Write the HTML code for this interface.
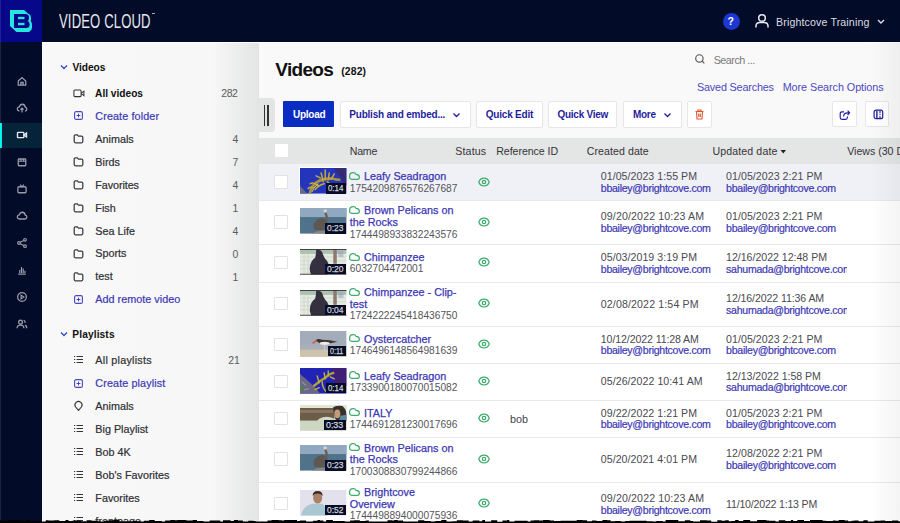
<!DOCTYPE html>
<html><head><meta charset="utf-8">
<style>
*{margin:0;padding:0;box-sizing:border-box}
html,body{width:900px;height:523px;overflow:hidden;background:#fff;font-family:"Liberation Sans",sans-serif;position:relative}
.a{position:absolute}
.t{white-space:nowrap}
svg{overflow:visible}
</style></head><body>
<div class="a" style="left:0.00px;top:0.00px;width:900.00px;height:42.00px;background:#020b27"></div>
<div class="a" style="left:0.00px;top:0.00px;width:42.00px;height:42.00px;background:#07078a"></div>
<div class="a" style="left:0.00px;top:42.00px;width:42.00px;height:481.00px;background:#020b27"></div>
<div class="a" style="left:42.00px;top:42.00px;width:217.00px;height:481.00px;background:linear-gradient(to right,#f8f8f8 0px,#f7f7f7 170px,#e3e4e4 217px)"></div>
<div class="a" style="left:259.00px;top:42.00px;width:641.00px;height:481.00px;background:#f9f9f9"></div>
<div class="a" style="left:42.00px;top:42.00px;width:858.00px;height:1.00px;background:#fff"></div>
<svg class="a" style="left:0.00px;top:0.00px" width="42" height="42" viewBox="0 0 42 42"><path d="M10 10 H24 L28 13.5 Q31 14.5 31 18 V19.8 L30.6 21 Q32 22 32 24.5 V27.5 Q32 30.5 29.5 31.5 L29 32 H16.5 L10 26 Z" fill="#25e6dc"/><path d="M14 14 H25.5 Q29 14 29 17.5 V18.5 Q29 20.6 27.4 21.1 Q29.6 21.7 29.6 24.2 V25 Q29.6 28 26 28 H14 Z" fill="#07078a"/><rect x="18" y="16.8" width="6.5" height="2.4" fill="#25e6dc"/><rect x="18" y="22.8" width="6.5" height="2.4" fill="#25e6dc"/></svg>
<div class="a" style="left:58.5px;top:10.5px;font-size:20px;line-height:20px;color:#e6e8ee;transform:scaleX(0.655);transform-origin:0 0;white-space:nowrap;letter-spacing:0.2px">VIDEO CLOUD</div>
<div class="a" style="left:151.50px;top:13.20px;width:3.00px;height:0.80px;background:#aab"></div>
<div class="a" style="left:723.00px;top:13.00px;width:17.00px;height:17.00px;background:#1d37d0;border-radius:50%"></div>
<div class="a t" style="left:727.60px;top:16.00px;font-size:10.50px;line-height:10.50px;color:#fff;font-weight:bold;">?</div>
<svg class="a" style="left:754.00px;top:13.00px" width="16" height="16" viewBox="0 0 16 16"><circle cx="8" cy="5" r="3.3" fill="none" stroke="#e8e8ee" stroke-width="1.5"/><path d="M2 14.5 V13 Q2 9.5 6 9.5 H10 Q14 9.5 14 13 V14.5" fill="none" stroke="#e8e8ee" stroke-width="1.5"/></svg>
<div class="a t" style="left:776.00px;top:17.00px;font-size:10.60px;line-height:10.60px;color:#dcdde3;letter-spacing:0.148px;">Brightcove Training</div>
<svg class="a" style="left:876.00px;top:18.00px" width="10" height="7" viewBox="0 0 10 7"><path d="M2 2 L5 5 L8 2" fill="none" stroke="#dcdde3" stroke-width="1.4"/></svg>
<div class="a" style="left:0.00px;top:122.60px;width:42.00px;height:25.00px;background:#05243a"></div>
<div class="a" style="left:0.00px;top:122.60px;width:2.00px;height:25.00px;background:#00ecec"></div>
<svg class="a" style="left:16px;top:75.00px" width="12" height="12" viewBox="0 0 16 16"><path d="M3 8 L8 3.5 L13 8 V13.5 H3 Z" fill="none" stroke="#9a9cab" stroke-width="1.69"/><path d="M6.5 13.5 V10 H9.5 V13.5" fill="none" stroke="#9a9cab" stroke-width="1.69"/></svg>
<svg class="a" style="left:16px;top:102.00px" width="12" height="12" viewBox="0 0 16 16"><path d="M4.5 12 Q1.5 11.5 1.8 8.8 Q2.2 6.5 4.5 6.5 Q5.5 3 8.5 3 Q12 3.2 12.3 6.8 Q14.5 7 14.5 9.5 Q14.3 12 12 12" fill="none" stroke="#9a9cab" stroke-width="1.69"/><path d="M8 14 V8.5 M6 10.3 L8 8.3 L10 10.3" fill="none" stroke="#9a9cab" stroke-width="1.69"/></svg>
<svg class="a" style="left:16px;top:129.00px" width="12" height="12" viewBox="0 0 16 16"><rect x="2" y="4.5" width="8.5" height="7" rx="1" fill="none" stroke="#e8eaf0" stroke-width="1.82"/><path d="M10.5 8 L14 5.5 V10.5 Z" fill="none" stroke="#e8eaf0" stroke-width="1.82"/></svg>
<svg class="a" style="left:16px;top:156.00px" width="12" height="12" viewBox="0 0 16 16"><rect x="3" y="4" width="10" height="9" rx="1" fill="none" stroke="#9a9cab" stroke-width="1.69"/><path d="M3 7 H13 M6 4 L7 7 M9.5 4 L10.5 7" fill="none" stroke="#9a9cab" stroke-width="1.43"/></svg>
<svg class="a" style="left:16px;top:183.00px" width="12" height="12" viewBox="0 0 16 16"><rect x="2.5" y="5" width="11" height="8" rx="1.5" fill="none" stroke="#9a9cab" stroke-width="1.69"/><path d="M5.5 2 L8 5 L10.5 2" fill="none" stroke="#9a9cab" stroke-width="1.56"/></svg>
<svg class="a" style="left:16px;top:210.00px" width="12" height="12" viewBox="0 0 16 16"><path d="M4.5 12 Q1.5 11.5 1.8 8.8 Q2.2 6.5 4.5 6.5 Q5.5 3 8.5 3 Q12 3.2 12.3 6.8 Q14.5 7 14.5 9.5 Q14.3 12 12 12 Z" fill="none" stroke="#9a9cab" stroke-width="1.69"/><path d="" stroke="#9a9cab"/></svg>
<svg class="a" style="left:16px;top:237.00px" width="12" height="12" viewBox="0 0 16 16"><circle cx="4" cy="8" r="1.8" fill="none" stroke="#9a9cab" stroke-width="1.56"/><circle cx="12" cy="3.8" r="1.8" fill="none" stroke="#9a9cab" stroke-width="1.56"/><circle cx="12" cy="12.2" r="1.8" fill="none" stroke="#9a9cab" stroke-width="1.56"/><path d="M5.6 7.1 L10.4 4.7 M5.6 8.9 L10.4 11.3" stroke="#9a9cab" stroke-width="1.56"/></svg>
<svg class="a" style="left:16px;top:264.00px" width="12" height="12" viewBox="0 0 16 16"><path d="M3 13.5 H13 M5 12 V8 M7.3 12 V4 M9.6 12 V6 M11.9 12 V9" fill="none" stroke="#9a9cab" stroke-width="1.56"/><path d="" stroke="#9a9cab"/></svg>
<svg class="a" style="left:16px;top:291.00px" width="12" height="12" viewBox="0 0 16 16"><circle cx="8" cy="8" r="5.8" fill="none" stroke="#9a9cab" stroke-width="1.69"/><path d="M6.8 5.5 L10.5 8 L6.8 10.5 Z" fill="none" stroke="#9a9cab" stroke-width="1.56"/></svg>
<svg class="a" style="left:16px;top:318.00px" width="12" height="12" viewBox="0 0 16 16"><circle cx="6" cy="5.5" r="2.5" fill="none" stroke="#9a9cab" stroke-width="1.69"/><path d="M1.5 13.5 Q1.5 9.5 6 9.5 Q10.5 9.5 10.5 13.5 M10 3 Q12.5 3.5 12 6.5 M12 9.5 Q14.5 10.5 14.5 13.5" fill="none" stroke="#9a9cab" stroke-width="1.69"/></svg>
<svg class="a" style="left:60.00px;top:64.00px" width="8" height="6" viewBox="0 0 8 6"><path d="M1 1.5 L4 4.5 L7 1.5" fill="none" stroke="#3b4bd0" stroke-width="1.4"/></svg>
<div class="a t" style="left:72.40px;top:63.00px;font-size:10.20px;line-height:10.20px;color:#111;font-weight:bold;letter-spacing:-0.052px;">Videos</div>
<svg class="a" style="left:72.50px;top:88.50px" width="12" height="9" viewBox="0 0 12 9"><rect x="0.9" y="1" width="7.2" height="6.6" rx="1" fill="none" stroke="#333" stroke-width="1.05"/><path d="M8.2 4.2 L10.9 2.2 V6.6 L8.2 4.6" fill="none" stroke="#333" stroke-width="1.05"/></svg>
<div class="a t" style="left:95.10px;top:89.00px;font-size:10.20px;line-height:10.20px;color:#111;font-weight:bold;letter-spacing:-0.020px;">All videos</div>
<div class="a t" style="left:221.30px;top:89.00px;font-size:10.40px;line-height:10.40px;color:#5a5a5f;letter-spacing:-0.376px;">282</div>
<svg class="a" style="left:74.00px;top:111.00px" width="10" height="10" viewBox="0 0 10 10"><rect x="0.6" y="0.6" width="7.8" height="7.8" rx="1.5" fill="none" stroke="#4a45c0" stroke-width="1.1"/><path d="M4.5 2.6 V6.4 M2.6 4.5 H6.4" stroke="#3a35b0" stroke-width="0.9"/></svg>
<div class="a t" style="left:95.30px;top:111.00px;font-size:10.80px;line-height:10.80px;color:#3c37b3;letter-spacing:0.105px;-webkit-text-stroke:0.2px #3c37b3;">Create folder</div>
<svg class="a" style="left:73.00px;top:134.14px" width="11" height="10" viewBox="0 0 11 10"><path d="M1.2 2 Q1.2 0.8 2.4 0.8 H4.3 L5.5 2.1 H8.6 Q9.8 2.1 9.8 3.3 V7.6 Q9.8 8.8 8.6 8.8 H2.4 Q1.2 8.8 1.2 7.6 Z" fill="none" stroke="#3a3a40" stroke-width="1.25"/></svg>
<div class="a t" style="left:95.30px;top:134.00px;font-size:10.80px;line-height:10.80px;color:#2e2e33;letter-spacing:-0.002px;-webkit-text-stroke:0.2px #2e2e33;">Animals</div>
<div class="a t" style="left:232.60px;top:135.00px;font-size:10.40px;line-height:10.40px;color:#5a5a5f;">4</div>
<svg class="a" style="left:73.00px;top:157.11px" width="11" height="10" viewBox="0 0 11 10"><path d="M1.2 2 Q1.2 0.8 2.4 0.8 H4.3 L5.5 2.1 H8.6 Q9.8 2.1 9.8 3.3 V7.6 Q9.8 8.8 8.6 8.8 H2.4 Q1.2 8.8 1.2 7.6 Z" fill="none" stroke="#3a3a40" stroke-width="1.25"/></svg>
<div class="a t" style="left:95.30px;top:157.00px;font-size:10.80px;line-height:10.80px;color:#2e2e33;-webkit-text-stroke:0.2px #2e2e33;">Birds</div>
<div class="a t" style="left:232.60px;top:158.00px;font-size:10.40px;line-height:10.40px;color:#5a5a5f;">7</div>
<svg class="a" style="left:73.00px;top:180.08px" width="11" height="10" viewBox="0 0 11 10"><path d="M1.2 2 Q1.2 0.8 2.4 0.8 H4.3 L5.5 2.1 H8.6 Q9.8 2.1 9.8 3.3 V7.6 Q9.8 8.8 8.6 8.8 H2.4 Q1.2 8.8 1.2 7.6 Z" fill="none" stroke="#3a3a40" stroke-width="1.25"/></svg>
<div class="a t" style="left:95.30px;top:180.00px;font-size:10.80px;line-height:10.80px;color:#2e2e33;letter-spacing:-0.089px;-webkit-text-stroke:0.2px #2e2e33;">Favorites</div>
<div class="a t" style="left:232.60px;top:181.00px;font-size:10.40px;line-height:10.40px;color:#5a5a5f;">4</div>
<svg class="a" style="left:73.00px;top:203.05px" width="11" height="10" viewBox="0 0 11 10"><path d="M1.2 2 Q1.2 0.8 2.4 0.8 H4.3 L5.5 2.1 H8.6 Q9.8 2.1 9.8 3.3 V7.6 Q9.8 8.8 8.6 8.8 H2.4 Q1.2 8.8 1.2 7.6 Z" fill="none" stroke="#3a3a40" stroke-width="1.25"/></svg>
<div class="a t" style="left:95.30px;top:203.00px;font-size:10.80px;line-height:10.80px;color:#2e2e33;-webkit-text-stroke:0.2px #2e2e33;">Fish</div>
<div class="a t" style="left:232.60px;top:204.00px;font-size:10.40px;line-height:10.40px;color:#5a5a5f;">1</div>
<svg class="a" style="left:73.00px;top:226.02px" width="11" height="10" viewBox="0 0 11 10"><path d="M1.2 2 Q1.2 0.8 2.4 0.8 H4.3 L5.5 2.1 H8.6 Q9.8 2.1 9.8 3.3 V7.6 Q9.8 8.8 8.6 8.8 H2.4 Q1.2 8.8 1.2 7.6 Z" fill="none" stroke="#3a3a40" stroke-width="1.25"/></svg>
<div class="a t" style="left:95.30px;top:226.00px;font-size:10.80px;line-height:10.80px;color:#2e2e33;-webkit-text-stroke:0.2px #2e2e33;">Sea Life</div>
<div class="a t" style="left:232.60px;top:227.00px;font-size:10.40px;line-height:10.40px;color:#5a5a5f;">4</div>
<svg class="a" style="left:73.00px;top:248.99px" width="11" height="10" viewBox="0 0 11 10"><path d="M1.2 2 Q1.2 0.8 2.4 0.8 H4.3 L5.5 2.1 H8.6 Q9.8 2.1 9.8 3.3 V7.6 Q9.8 8.8 8.6 8.8 H2.4 Q1.2 8.8 1.2 7.6 Z" fill="none" stroke="#3a3a40" stroke-width="1.25"/></svg>
<div class="a t" style="left:95.30px;top:248.00px;font-size:10.80px;line-height:10.80px;color:#2e2e33;-webkit-text-stroke:0.2px #2e2e33;">Sports</div>
<div class="a t" style="left:232.60px;top:250.00px;font-size:10.40px;line-height:10.40px;color:#5a5a5f;">0</div>
<svg class="a" style="left:73.00px;top:271.96px" width="11" height="10" viewBox="0 0 11 10"><path d="M1.2 2 Q1.2 0.8 2.4 0.8 H4.3 L5.5 2.1 H8.6 Q9.8 2.1 9.8 3.3 V7.6 Q9.8 8.8 8.6 8.8 H2.4 Q1.2 8.8 1.2 7.6 Z" fill="none" stroke="#3a3a40" stroke-width="1.25"/></svg>
<div class="a t" style="left:95.30px;top:271.00px;font-size:10.80px;line-height:10.80px;color:#2e2e33;-webkit-text-stroke:0.2px #2e2e33;">test</div>
<div class="a t" style="left:232.60px;top:273.00px;font-size:10.40px;line-height:10.40px;color:#5a5a5f;">1</div>
<svg class="a" style="left:74.00px;top:295.00px" width="10" height="10" viewBox="0 0 10 10"><rect x="0.6" y="0.6" width="7.8" height="7.8" rx="1.5" fill="none" stroke="#4a45c0" stroke-width="1.1"/><path d="M4.5 2.6 V6.4 M2.6 4.5 H6.4" stroke="#3a35b0" stroke-width="0.9"/></svg>
<div class="a t" style="left:95.30px;top:294.00px;font-size:10.80px;line-height:10.80px;color:#3c37b3;letter-spacing:0.023px;-webkit-text-stroke:0.2px #3c37b3;">Add remote video</div>
<svg class="a" style="left:60.00px;top:331.00px" width="8" height="6" viewBox="0 0 8 6"><path d="M1 1.5 L4 4.5 L7 1.5" fill="none" stroke="#3b4bd0" stroke-width="1.4"/></svg>
<div class="a t" style="left:72.30px;top:330.00px;font-size:10.20px;line-height:10.20px;color:#111;font-weight:bold;letter-spacing:0.113px;">Playlists</div>
<svg class="a" style="left:74.00px;top:356.00px" width="10" height="8" viewBox="0 0 10 8"><path d="M0 0.5 H1.2 M0 3.5 H1.2 M0 6.5 H1.2 M2.6 0.5 H9 M2.6 3.5 H9 M2.6 6.5 H9" stroke="#333" stroke-width="1"/></svg>
<div class="a t" style="left:95.30px;top:355.00px;font-size:10.80px;line-height:10.80px;color:#2e2e33;letter-spacing:0.240px;-webkit-text-stroke:0.2px #2e2e33;">All playlists</div>
<div class="a t" style="left:228.20px;top:356.00px;font-size:10.40px;line-height:10.40px;color:#5a5a5f;">21</div>
<svg class="a" style="left:74.00px;top:379.00px" width="10" height="10" viewBox="0 0 10 10"><rect x="0.6" y="0.6" width="7.8" height="7.8" rx="1.5" fill="none" stroke="#4a45c0" stroke-width="1.1"/><path d="M4.5 2.6 V6.4 M2.6 4.5 H6.4" stroke="#3a35b0" stroke-width="0.9"/></svg>
<div class="a t" style="left:95.30px;top:378.00px;font-size:10.80px;line-height:10.80px;color:#3c37b3;letter-spacing:0.112px;-webkit-text-stroke:0.2px #3c37b3;">Create playlist</div>
<svg class="a" style="left:74.00px;top:401.00px" width="10" height="11" viewBox="0 0 10 11"><path d="M4.5 9.3 L1.63 6 A3.5 3.5 0 1 1 7.37 6 Z" fill="none" stroke="#333" stroke-width="1.1" stroke-linejoin="round"/></svg>
<div class="a t" style="left:95.30px;top:401.00px;font-size:10.80px;line-height:10.80px;color:#2e2e33;-webkit-text-stroke:0.2px #2e2e33;">Animals</div>
<svg class="a" style="left:74.00px;top:425.00px" width="10" height="8" viewBox="0 0 10 8"><path d="M0 0.5 H1.2 M0 3.5 H1.2 M0 6.5 H1.2 M2.6 0.5 H9 M2.6 3.5 H9 M2.6 6.5 H9" stroke="#333" stroke-width="1"/></svg>
<div class="a t" style="left:95.30px;top:424.00px;font-size:10.80px;line-height:10.80px;color:#2e2e33;-webkit-text-stroke:0.2px #2e2e33;">Big Playlist</div>
<svg class="a" style="left:74.00px;top:448.00px" width="10" height="8" viewBox="0 0 10 8"><path d="M0 0.5 H1.2 M0 3.5 H1.2 M0 6.5 H1.2 M2.6 0.5 H9 M2.6 3.5 H9 M2.6 6.5 H9" stroke="#333" stroke-width="1"/></svg>
<div class="a t" style="left:95.30px;top:447.00px;font-size:10.80px;line-height:10.80px;color:#2e2e33;-webkit-text-stroke:0.2px #2e2e33;">Bob 4K</div>
<svg class="a" style="left:74.00px;top:471.00px" width="10" height="8" viewBox="0 0 10 8"><path d="M0 0.5 H1.2 M0 3.5 H1.2 M0 6.5 H1.2 M2.6 0.5 H9 M2.6 3.5 H9 M2.6 6.5 H9" stroke="#333" stroke-width="1"/></svg>
<div class="a t" style="left:95.30px;top:470.00px;font-size:10.80px;line-height:10.80px;color:#2e2e33;-webkit-text-stroke:0.2px #2e2e33;">Bob&#x27;s Favorites</div>
<svg class="a" style="left:74.00px;top:494.00px" width="10" height="8" viewBox="0 0 10 8"><path d="M0 0.5 H1.2 M0 3.5 H1.2 M0 6.5 H1.2 M2.6 0.5 H9 M2.6 3.5 H9 M2.6 6.5 H9" stroke="#333" stroke-width="1"/></svg>
<div class="a t" style="left:95.30px;top:493.00px;font-size:10.80px;line-height:10.80px;color:#2e2e33;-webkit-text-stroke:0.2px #2e2e33;">Favorites</div>
<svg class="a" style="left:74.00px;top:517.00px" width="10" height="8" viewBox="0 0 10 8"><path d="M0 0.5 H1.2 M0 3.5 H1.2 M0 6.5 H1.2 M2.6 0.5 H9 M2.6 3.5 H9 M2.6 6.5 H9" stroke="#333" stroke-width="1"/></svg>
<div class="a t" style="left:95.30px;top:516.00px;font-size:10.80px;line-height:10.80px;color:#2e2e33;-webkit-text-stroke:0.2px #2e2e33;">frontpage</div>
<div class="a t" style="left:275.30px;top:60.00px;font-size:19.00px;line-height:19.00px;color:#111;font-weight:bold;letter-spacing:-0.711px;">Videos</div>
<div class="a t" style="left:341.30px;top:67.00px;font-size:10.40px;line-height:10.40px;color:#111;font-weight:bold;letter-spacing:0.105px;">(282)</div>
<svg class="a" style="left:694.80px;top:54.00px" width="11" height="11" viewBox="0 0 11 11"><circle cx="4.4" cy="4.4" r="3.7" fill="none" stroke="#555" stroke-width="1.15"/><path d="M7.1 7.1 L9.4 9.4" stroke="#555" stroke-width="1.2"/></svg>
<div class="a t" style="left:713.70px;top:55.00px;font-size:10.80px;line-height:10.80px;color:#7a7a80;letter-spacing:-0.514px;">Search ...</div>
<div class="a t" style="left:697.00px;top:82.00px;font-size:10.80px;line-height:10.80px;color:#4c48c0;letter-spacing:-0.173px;">Saved Searches</div>
<div class="a t" style="left:782.70px;top:82.00px;font-size:10.80px;line-height:10.80px;color:#4c48c0;letter-spacing:-0.058px;">More Search Options</div>
<div class="a" style="left:259.00px;top:98.40px;width:15.70px;height:34.00px;background:#e3e4e4;border-radius:0 4px 4px 0"></div>
<div class="a" style="left:263.60px;top:104.80px;width:1.80px;height:21.20px;background:#333"></div>
<div class="a" style="left:267.20px;top:104.80px;width:1.80px;height:21.20px;background:#333"></div>
<div class="a" style="left:283.30px;top:101.20px;width:51.10px;height:26.20px;background:#0a2cc2;border-radius:1px"></div>
<div class="a t" style="left:292.90px;top:110.00px;font-size:10.00px;line-height:10.00px;color:#fff;font-weight:bold;letter-spacing:-0.237px;">Upload</div>
<div class="a" style="left:340.00px;top:101.00px;width:130.70px;height:26.50px;background:#fff;border:1px solid #e6e6e8;border-radius:2px"></div>
<div class="a t" style="left:349.30px;top:110.00px;font-size:10.00px;line-height:10.00px;color:#1f1d9e;font-weight:bold;letter-spacing:-0.211px;">Publish and embed...</div>
<svg class="a" style="left:452.00px;top:112.00px" width="9" height="7" viewBox="0 0 9 7"><path d="M1.5 1.5 L4.5 4.5 L7.5 1.5" fill="none" stroke="#1f1d9e" stroke-width="1.3"/></svg>
<div class="a" style="left:476.00px;top:101.00px;width:66.80px;height:26.50px;background:#fff;border:1px solid #e6e6e8;border-radius:2px"></div>
<div class="a t" style="left:485.80px;top:110.00px;font-size:10.00px;line-height:10.00px;color:#1f1d9e;font-weight:bold;letter-spacing:-0.217px;">Quick Edit</div>
<div class="a" style="left:548.30px;top:101.00px;width:68.90px;height:26.50px;background:#fff;border:1px solid #e6e6e8;border-radius:2px"></div>
<div class="a t" style="left:557.50px;top:110.00px;font-size:10.00px;line-height:10.00px;color:#1f1d9e;font-weight:bold;letter-spacing:-0.264px;">Quick View</div>
<div class="a" style="left:623.30px;top:101.00px;width:58.40px;height:26.50px;background:#fff;border:1px solid #e6e6e8;border-radius:2px"></div>
<div class="a t" style="left:633.00px;top:110.00px;font-size:10.00px;line-height:10.00px;color:#1f1d9e;font-weight:bold;letter-spacing:-0.297px;">More</div>
<svg class="a" style="left:663.00px;top:112.00px" width="9" height="7" viewBox="0 0 9 7"><path d="M1.5 1.5 L4.5 4.5 L7.5 1.5" fill="none" stroke="#1f1d9e" stroke-width="1.3"/></svg>
<div class="a" style="left:687.20px;top:101.00px;width:24.50px;height:26.50px;background:#fff;border:1px solid #e6e6e8;border-radius:2px"></div>
<svg class="a" style="left:694.00px;top:109.00px" width="11" height="11" viewBox="0 0 11 11"><path d="M1.5 2.5 H9.5 M4 2.5 V1 H7 V2.5 M2.5 2.5 L3 10 H8 L8.5 2.5 M4.7 4.5 V8 M6.3 4.5 V8" fill="none" stroke="#e0552e" stroke-width="1.1"/></svg>
<div class="a" style="left:832.40px;top:101.20px;width:24.20px;height:26.20px;background:#fff;border:1px solid #e6e6e8;border-radius:2px"></div>
<svg class="a" style="left:839.00px;top:108.50px" width="12" height="12" viewBox="0 0 12 12"><path d="M5 2.8 H3 Q1.2 2.8 1.2 4.6 V8.6 Q1.2 10.4 3 10.4 H6.6 Q8.4 10.4 8.4 8.6 V7.6" fill="none" stroke="#1f1d9e" stroke-width="1.15"/><path d="M4.6 7.6 Q4.6 3.8 8.6 3.8 H10.2 M8.6 1.6 L10.6 3.8 L8.6 6" fill="none" stroke="#1f1d9e" stroke-width="1.15"/></svg>
<div class="a" style="left:865.30px;top:101.20px;width:24.20px;height:26.20px;background:#fff;border:1px solid #e6e6e8;border-radius:2px"></div>
<svg class="a" style="left:872.50px;top:108.70px" width="11" height="11" viewBox="0 0 11 11"><rect x="1.1" y="1.1" width="8.6" height="8.6" rx="2" fill="none" stroke="#1f1d9e" stroke-width="1.2"/><path d="M3.9 1.5 V9.5" stroke="#1f1d9e" stroke-width="1.4"/><path d="M7 1.5 V4 M7 7 V9.5" stroke="#1f1d9e" stroke-width="1.1"/><path d="M6.1 4.8 H7.9 L7 6.4 Z" fill="#1f1d9e"/></svg>
<div class="a" style="left:259.00px;top:138.00px;width:641.00px;height:26.00px;background:#e4e5e5"></div>
<div class="a" style="left:274.50px;top:144.00px;width:13.50px;height:12.50px;background:#fff;border-radius:1px"></div>
<div class="a t" style="left:349.80px;top:146.00px;font-size:10.60px;line-height:10.60px;color:#333338;letter-spacing:-0.259px;">Name</div>
<div class="a t" style="left:455.20px;top:146.00px;font-size:10.60px;line-height:10.60px;color:#333338;letter-spacing:0.190px;">Status</div>
<div class="a t" style="left:496.20px;top:146.00px;font-size:10.60px;line-height:10.60px;color:#333338;letter-spacing:-0.041px;">Reference ID</div>
<div class="a t" style="left:586.80px;top:146.00px;font-size:10.60px;line-height:10.60px;color:#333338;letter-spacing:0.065px;">Created date</div>
<div class="a t" style="left:712.40px;top:146.00px;font-size:10.60px;line-height:10.60px;color:#333338;letter-spacing:0.122px;">Updated date</div>
<svg class="a" style="left:780.00px;top:149.00px" width="7" height="6" viewBox="0 0 7 6"><path d="M0.5 1 H6 L3.25 4.5 Z" fill="#222"/></svg>
<div class="a t" style="left:847.20px;top:146.00px;font-size:10.60px;line-height:10.60px;color:#333338;">Views (30 Days)</div>
<div class="a" style="left:259.00px;top:164.00px;width:641.00px;height:36.00px;background:#f0f1f7"></div>
<div class="a" style="left:259.00px;top:200.00px;width:641.00px;height:44.00px;background:#fff"></div>
<div class="a" style="left:259.00px;top:244.00px;width:641.00px;height:37.50px;background:#fff"></div>
<div class="a" style="left:259.00px;top:281.50px;width:641.00px;height:44.50px;background:#fff"></div>
<div class="a" style="left:259.00px;top:326.00px;width:641.00px;height:37.00px;background:#fff"></div>
<div class="a" style="left:259.00px;top:363.00px;width:641.00px;height:37.00px;background:#fff"></div>
<div class="a" style="left:259.00px;top:400.00px;width:641.00px;height:37.00px;background:#fff"></div>
<div class="a" style="left:259.00px;top:437.00px;width:641.00px;height:44.50px;background:#fff"></div>
<div class="a" style="left:259.00px;top:481.50px;width:641.00px;height:44.50px;background:#fff"></div>
<div class="a" style="left:259.00px;top:200.00px;width:641.00px;height:1.00px;background:#e9e9ea"></div>
<div class="a" style="left:259.00px;top:244.00px;width:641.00px;height:1.00px;background:#e9e9ea"></div>
<div class="a" style="left:259.00px;top:282.00px;width:641.00px;height:1.00px;background:#e9e9ea"></div>
<div class="a" style="left:259.00px;top:326.00px;width:641.00px;height:1.00px;background:#e9e9ea"></div>
<div class="a" style="left:259.00px;top:363.00px;width:641.00px;height:1.00px;background:#e9e9ea"></div>
<div class="a" style="left:259.00px;top:400.00px;width:641.00px;height:1.00px;background:#e9e9ea"></div>
<div class="a" style="left:259.00px;top:437.00px;width:641.00px;height:1.00px;background:#e9e9ea"></div>
<div class="a" style="left:259.00px;top:482.00px;width:641.00px;height:1.00px;background:#e9e9ea"></div>
<div class="a" style="left:259.00px;top:526.00px;width:641.00px;height:1.00px;background:#e9e9ea"></div>
<div class="a" style="left:274.30px;top:175.00px;width:13.50px;height:13.50px;background:#fff;border:1px solid #e2e2e4;border-radius:1px"></div>
<div class="a" style="left:299.00px;top:167.20px;width:48.00px;height:27.20px;background:#fff"></div>
<svg class="a" style="left:299.80px;top:168.00px" width="46.4" height="25.6" viewBox="0 0 46 26" preserveAspectRatio="none"><rect width="46" height="26" fill="#2434bb"/><path d="M34 0 H46 V18 Q40 12 34 0Z" fill="#3a2a66" opacity=".8"/><path d="M0 18 L7 26 H0Z" fill="#6a6a80"/><g fill="none" stroke-linecap="round"><path d="M10 25 Q11 18 17 14 Q24 10 33 11 Q36 12 39 12" stroke="#a8953a" stroke-width="2.6"/><path d="M15 22 Q19 17 24 16 M21 5 L23 14 M25 2 L25 12 M29 5 L28 12 M18 18 Q13 14 10 16 M27 14 Q31 18 34 17 M13 20 Q9 19 8 21 M31 11 L34 6 M20 10 L16 8" stroke="#c2aa40" stroke-width="1.5"/><path d="M12 24 Q14 19 18 16" stroke="#d8c050" stroke-width="1"/></g></svg>
<div class="a" style="left:326.10px;top:183.20px;width:19.90px;height:10.40px;background:#060c26"></div>
<div class="a t" style="left:328.20px;top:184.00px;font-size:9.30px;line-height:9.30px;color:#d4d5dc;-webkit-text-stroke:0.25px #d4d5dc;transform:scaleX(0.845);transform-origin:0 0;">0:14</div>
<svg class="a" style="left:349.30px;top:171.80px" width="11" height="8" viewBox="0 0 11 8"><path d="M2.6 7.3 Q0.6 7.3 0.6 5 V4.2 Q0.6 0.6 4.2 0.6 Q6.3 0.6 7.1 2.4 Q10.4 2.7 10.4 5.3 Q10.4 7.3 8.4 7.3 Z" fill="none" stroke="#3cab6c" stroke-width="1.2"/></svg>
<div class="a t" style="left:364.00px;top:171.00px;font-size:10.80px;line-height:10.80px;color:#3c37b3;-webkit-text-stroke:0.25px #3c37b3;">Leafy Seadragon</div>
<div class="a t" style="left:349.80px;top:184.00px;font-size:10.20px;line-height:10.20px;color:#55555a;">1754209876576267687</div>
<svg class="a" style="left:478.40px;top:176.70px" width="12" height="10" viewBox="0 0 12 10"><path d="M0.8 5 C2.5 -0.3 9.5 -0.3 11.2 5 C9.5 10.3 2.5 10.3 0.8 5 Z" fill="none" stroke="#3cab6c" stroke-width="1.2"/><circle cx="6" cy="5" r="1.7" fill="none" stroke="#3cab6c" stroke-width="1.2"/></svg>
<div class="a t" style="left:600.80px;top:171.00px;font-size:10.60px;line-height:10.60px;color:#4a4a4f;letter-spacing:0.049px;">01/05/2023 1:55 PM</div>
<div class="a t" style="left:600.80px;top:183.00px;font-size:10.60px;line-height:10.60px;color:#3c37b3;letter-spacing:-0.290px;-webkit-text-stroke:0.2px #3c37b3;">bbailey@brightcove.com</div>
<div class="a t" style="left:726.10px;top:171.00px;font-size:10.60px;line-height:10.60px;color:#4a4a4f;letter-spacing:0.049px;">01/05/2023 2:21 PM</div>
<div class="a t" style="left:726.10px;top:183.00px;font-size:10.60px;line-height:10.60px;color:#3c37b3;letter-spacing:-0.290px;-webkit-text-stroke:0.2px #3c37b3;width:121px;overflow:hidden;">bbailey@brightcove.com</div>
<div class="a" style="left:274.30px;top:215.00px;width:13.50px;height:13.50px;background:#fff;border:1px solid #e2e2e4;border-radius:1px"></div>
<div class="a" style="left:299.00px;top:207.20px;width:48.00px;height:27.20px;background:#fff"></div>
<svg class="a" style="left:299.80px;top:208.00px" width="46.4" height="25.6" viewBox="0 0 46 26" preserveAspectRatio="none"><rect width="46" height="26" fill="#50728a"/><rect width="46" height="9.2" fill="#90a9c0"/><path d="M14 22 Q12 15 17 12 Q22 9 26 12 Q28 17 25 23 Z" fill="#5f5752"/><path d="M25 4 Q27 8 26.5 14" stroke="#6a605a" stroke-width="2.4" fill="none"/><circle cx="25" cy="3" r="1.8" fill="#d8d2c8"/><path d="M12 26 Q18 22 28 23 V26Z" fill="#8a8580"/></svg>
<div class="a" style="left:325.10px;top:223.20px;width:20.90px;height:10.40px;background:#060c26"></div>
<div class="a t" style="left:327.20px;top:224.00px;font-size:9.30px;line-height:9.30px;color:#d4d5dc;-webkit-text-stroke:0.25px #d4d5dc;transform:scaleX(0.901);transform-origin:0 0;">0:23</div>
<svg class="a" style="left:349.30px;top:206.00px" width="11" height="8" viewBox="0 0 11 8"><path d="M2.6 7.3 Q0.6 7.3 0.6 5 V4.2 Q0.6 0.6 4.2 0.6 Q6.3 0.6 7.1 2.4 Q10.4 2.7 10.4 5.3 Q10.4 7.3 8.4 7.3 Z" fill="none" stroke="#3cab6c" stroke-width="1.2"/></svg>
<div class="a t" style="left:364.00px;top:205.00px;font-size:10.80px;line-height:10.80px;color:#3c37b3;-webkit-text-stroke:0.25px #3c37b3;">Brown Pelicans on</div>
<div class="a t" style="left:349.80px;top:217.00px;font-size:10.80px;line-height:10.80px;color:#3c37b3;-webkit-text-stroke:0.25px #3c37b3;">the Rocks</div>
<div class="a t" style="left:349.80px;top:230.00px;font-size:10.20px;line-height:10.20px;color:#55555a;">1744498933832243576</div>
<svg class="a" style="left:478.40px;top:216.70px" width="12" height="10" viewBox="0 0 12 10"><path d="M0.8 5 C2.5 -0.3 9.5 -0.3 11.2 5 C9.5 10.3 2.5 10.3 0.8 5 Z" fill="none" stroke="#3cab6c" stroke-width="1.2"/><circle cx="6" cy="5" r="1.7" fill="none" stroke="#3cab6c" stroke-width="1.2"/></svg>
<div class="a t" style="left:600.80px;top:211.00px;font-size:10.60px;line-height:10.60px;color:#4a4a4f;letter-spacing:0.139px;">09/20/2022 10:23 AM</div>
<div class="a t" style="left:600.80px;top:223.00px;font-size:10.60px;line-height:10.60px;color:#3c37b3;letter-spacing:-0.290px;-webkit-text-stroke:0.2px #3c37b3;">bbailey@brightcove.com</div>
<div class="a t" style="left:726.10px;top:211.00px;font-size:10.60px;line-height:10.60px;color:#4a4a4f;letter-spacing:0.049px;">01/05/2023 2:21 PM</div>
<div class="a t" style="left:726.10px;top:223.00px;font-size:10.60px;line-height:10.60px;color:#3c37b3;letter-spacing:-0.290px;-webkit-text-stroke:0.2px #3c37b3;width:121px;overflow:hidden;">bbailey@brightcove.com</div>
<div class="a" style="left:274.30px;top:255.75px;width:13.50px;height:13.50px;background:#fff;border:1px solid #e2e2e4;border-radius:1px"></div>
<div class="a" style="left:299.00px;top:247.95px;width:48.00px;height:27.20px;background:#fff"></div>
<svg class="a" style="left:299.80px;top:248.75px" width="46.4" height="25.6" viewBox="0 0 46 26" preserveAspectRatio="none"><rect width="46" height="26" fill="#e4eae0"/><rect width="46" height="5" fill="#7f9e8c" opacity=".55"/><path d="M0 8 H46 M0 12 H46 M0 16 H46 M0 20 H46 M4 0 V26 M8 0 V26" stroke="#b8c0b4" stroke-width=".6" opacity=".6"/><rect x="33" y="0" width="3.5" height="15" fill="#8c7a70"/><rect x="38" y="2" width="5" height="6" fill="#9aa0c0" opacity=".6"/><path d="M16 1 Q20 0 22 3 Q23 7 25 10 Q29 14 29 20 Q29 26 26 26 H11 Q9 22 10 17 Q11 12 15 9 Q16 5 16 1 Z" fill="#34303f"/><rect width="46" height="0.9" fill="#333"/><rect y="25.2" width="46" height=".8" fill="#222"/></svg>
<div class="a" style="left:324.90px;top:263.95px;width:21.10px;height:10.40px;background:#060c26"></div>
<div class="a t" style="left:327.00px;top:265.00px;font-size:9.30px;line-height:9.30px;color:#d4d5dc;-webkit-text-stroke:0.25px #d4d5dc;transform:scaleX(0.912);transform-origin:0 0;">0:20</div>
<svg class="a" style="left:349.30px;top:252.55px" width="11" height="8" viewBox="0 0 11 8"><path d="M2.6 7.3 Q0.6 7.3 0.6 5 V4.2 Q0.6 0.6 4.2 0.6 Q6.3 0.6 7.1 2.4 Q10.4 2.7 10.4 5.3 Q10.4 7.3 8.4 7.3 Z" fill="none" stroke="#3cab6c" stroke-width="1.2"/></svg>
<div class="a t" style="left:364.00px;top:252.00px;font-size:10.80px;line-height:10.80px;color:#3c37b3;-webkit-text-stroke:0.25px #3c37b3;">Chimpanzee</div>
<div class="a t" style="left:349.80px;top:264.00px;font-size:10.20px;line-height:10.20px;color:#55555a;">6032704472001</div>
<svg class="a" style="left:478.40px;top:257.45px" width="12" height="10" viewBox="0 0 12 10"><path d="M0.8 5 C2.5 -0.3 9.5 -0.3 11.2 5 C9.5 10.3 2.5 10.3 0.8 5 Z" fill="none" stroke="#3cab6c" stroke-width="1.2"/><circle cx="6" cy="5" r="1.7" fill="none" stroke="#3cab6c" stroke-width="1.2"/></svg>
<div class="a t" style="left:600.80px;top:252.00px;font-size:10.60px;line-height:10.60px;color:#4a4a4f;letter-spacing:0.049px;">05/03/2019 3:19 PM</div>
<div class="a t" style="left:600.80px;top:264.00px;font-size:10.60px;line-height:10.60px;color:#3c37b3;letter-spacing:-0.290px;-webkit-text-stroke:0.2px #3c37b3;">bbailey@brightcove.com</div>
<div class="a t" style="left:726.10px;top:252.00px;font-size:10.60px;line-height:10.60px;color:#4a4a4f;letter-spacing:-0.022px;">12/16/2022 12:48 PM</div>
<div class="a t" style="left:726.10px;top:264.00px;font-size:10.60px;line-height:10.60px;color:#3c37b3;letter-spacing:-0.290px;-webkit-text-stroke:0.2px #3c37b3;width:121px;overflow:hidden;">sahumada@brightcove.com</div>
<div class="a" style="left:274.30px;top:296.75px;width:13.50px;height:13.50px;background:#fff;border:1px solid #e2e2e4;border-radius:1px"></div>
<div class="a" style="left:299.00px;top:288.95px;width:48.00px;height:27.20px;background:#fff"></div>
<svg class="a" style="left:299.80px;top:289.75px" width="46.4" height="25.6" viewBox="0 0 46 26" preserveAspectRatio="none"><rect width="46" height="26" fill="#e4eae0"/><rect width="46" height="5" fill="#7f9e8c" opacity=".55"/><path d="M0 8 H46 M0 12 H46 M0 16 H46 M0 20 H46 M4 0 V26 M8 0 V26" stroke="#b8c0b4" stroke-width=".6" opacity=".6"/><rect x="33" y="0" width="3.5" height="15" fill="#8c7a70"/><rect x="38" y="2" width="5" height="6" fill="#9aa0c0" opacity=".6"/><path d="M16 1 Q20 0 22 3 Q23 7 25 10 Q29 14 29 20 Q29 26 26 26 H11 Q9 22 10 17 Q11 12 15 9 Q16 5 16 1 Z" fill="#34303f"/><rect width="46" height="0.9" fill="#333"/><rect y="25.2" width="46" height=".8" fill="#222"/></svg>
<div class="a" style="left:325.00px;top:304.95px;width:21.00px;height:10.40px;background:#060c26"></div>
<div class="a t" style="left:327.10px;top:306.00px;font-size:9.30px;line-height:9.30px;color:#d4d5dc;-webkit-text-stroke:0.25px #d4d5dc;transform:scaleX(0.906);transform-origin:0 0;">0:04</div>
<svg class="a" style="left:349.30px;top:287.75px" width="11" height="8" viewBox="0 0 11 8"><path d="M2.6 7.3 Q0.6 7.3 0.6 5 V4.2 Q0.6 0.6 4.2 0.6 Q6.3 0.6 7.1 2.4 Q10.4 2.7 10.4 5.3 Q10.4 7.3 8.4 7.3 Z" fill="none" stroke="#3cab6c" stroke-width="1.2"/></svg>
<div class="a t" style="left:364.00px;top:287.00px;font-size:10.80px;line-height:10.80px;color:#3c37b3;-webkit-text-stroke:0.25px #3c37b3;">Chimpanzee - Clip-</div>
<div class="a t" style="left:349.80px;top:299.00px;font-size:10.80px;line-height:10.80px;color:#3c37b3;-webkit-text-stroke:0.25px #3c37b3;">test</div>
<div class="a t" style="left:349.80px;top:311.00px;font-size:10.20px;line-height:10.20px;color:#55555a;">1724222245418436750</div>
<svg class="a" style="left:478.40px;top:298.45px" width="12" height="10" viewBox="0 0 12 10"><path d="M0.8 5 C2.5 -0.3 9.5 -0.3 11.2 5 C9.5 10.3 2.5 10.3 0.8 5 Z" fill="none" stroke="#3cab6c" stroke-width="1.2"/><circle cx="6" cy="5" r="1.7" fill="none" stroke="#3cab6c" stroke-width="1.2"/></svg>
<div class="a t" style="left:600.80px;top:299.00px;font-size:10.60px;line-height:10.60px;color:#4a4a4f;letter-spacing:0.135px;">02/08/2022 1:54 PM</div>
<div class="a t" style="left:726.10px;top:293.00px;font-size:10.60px;line-height:10.60px;color:#4a4a4f;letter-spacing:-0.102px;">12/16/2022 11:36 AM</div>
<div class="a t" style="left:726.10px;top:305.00px;font-size:10.60px;line-height:10.60px;color:#3c37b3;letter-spacing:-0.290px;-webkit-text-stroke:0.2px #3c37b3;width:121px;overflow:hidden;">sahumada@brightcove.com</div>
<div class="a" style="left:274.30px;top:337.50px;width:13.50px;height:13.50px;background:#fff;border:1px solid #e2e2e4;border-radius:1px"></div>
<div class="a" style="left:299.00px;top:329.70px;width:48.00px;height:27.20px;background:#fff"></div>
<svg class="a" style="left:299.80px;top:330.50px" width="46.4" height="25.6" viewBox="0 0 46 26" preserveAspectRatio="none"><rect width="46" height="26" fill="#a3acbb"/><rect y="14" width="46" height="5" fill="#aab0ba"/><rect y="19" width="46" height="7" fill="#cfc2aa"/><path d="M16 9 Q18 7 22 9 Q30 9 37 11 Q30 13 24 13.5 Q19 13 16.5 10.5Z" fill="#3e3432"/><ellipse cx="24.5" cy="12.5" rx="5" ry="1.7" fill="#ecebe8"/><path d="M16 9.8 L12.5 12.5" stroke="#e3542c" stroke-width="1.6"/><path d="M24.5 14 V20" stroke="#d8d0c8" stroke-width=".9"/></svg>
<div class="a" style="left:328.20px;top:345.70px;width:17.80px;height:10.40px;background:#060c26"></div>
<div class="a t" style="left:330.30px;top:347.00px;font-size:9.30px;line-height:9.30px;color:#d4d5dc;-webkit-text-stroke:0.25px #d4d5dc;transform:scaleX(0.758);transform-origin:0 0;">0:11</div>
<svg class="a" style="left:349.30px;top:334.30px" width="11" height="8" viewBox="0 0 11 8"><path d="M2.6 7.3 Q0.6 7.3 0.6 5 V4.2 Q0.6 0.6 4.2 0.6 Q6.3 0.6 7.1 2.4 Q10.4 2.7 10.4 5.3 Q10.4 7.3 8.4 7.3 Z" fill="none" stroke="#3cab6c" stroke-width="1.2"/></svg>
<div class="a t" style="left:364.00px;top:334.00px;font-size:10.80px;line-height:10.80px;color:#3c37b3;-webkit-text-stroke:0.25px #3c37b3;">Oystercatcher</div>
<div class="a t" style="left:349.80px;top:346.00px;font-size:10.20px;line-height:10.20px;color:#55555a;">1746496148564981639</div>
<svg class="a" style="left:478.40px;top:339.20px" width="12" height="10" viewBox="0 0 12 10"><path d="M0.8 5 C2.5 -0.3 9.5 -0.3 11.2 5 C9.5 10.3 2.5 10.3 0.8 5 Z" fill="none" stroke="#3cab6c" stroke-width="1.2"/><circle cx="6" cy="5" r="1.7" fill="none" stroke="#3cab6c" stroke-width="1.2"/></svg>
<div class="a t" style="left:600.80px;top:334.00px;font-size:10.60px;line-height:10.60px;color:#4a4a4f;letter-spacing:-0.102px;">10/12/2022 11:28 AM</div>
<div class="a t" style="left:600.80px;top:345.00px;font-size:10.60px;line-height:10.60px;color:#3c37b3;letter-spacing:-0.290px;-webkit-text-stroke:0.2px #3c37b3;">bbailey@brightcove.com</div>
<div class="a t" style="left:726.10px;top:334.00px;font-size:10.60px;line-height:10.60px;color:#4a4a4f;letter-spacing:0.049px;">01/05/2023 2:21 PM</div>
<div class="a t" style="left:726.10px;top:345.00px;font-size:10.60px;line-height:10.60px;color:#3c37b3;letter-spacing:-0.290px;-webkit-text-stroke:0.2px #3c37b3;width:121px;overflow:hidden;">bbailey@brightcove.com</div>
<div class="a" style="left:274.30px;top:374.50px;width:13.50px;height:13.50px;background:#fff;border:1px solid #e2e2e4;border-radius:1px"></div>
<div class="a" style="left:299.00px;top:366.70px;width:48.00px;height:27.20px;background:#fff"></div>
<svg class="a" style="left:299.80px;top:367.50px" width="46.4" height="25.6" viewBox="0 0 46 26" preserveAspectRatio="none"><rect width="46" height="26" fill="#2023b3"/><path d="M32 0 H46 V18 H36 Q32 8 32 0Z" fill="#4a2060" opacity=".75"/><path d="M0 6 Q6 11 10 15 Q15 19 20 26 H0Z" fill="#6a6884"/><path d="M2 14 L6 18 M4 22 L9 21" stroke="#9a98a8" stroke-width="1"/><g fill="none" stroke-linecap="round"><path d="M14 18 Q20 13 25 10 Q29 6 33 5" stroke="#b0a03a" stroke-width="2.4"/><path d="M17 8 L19 15 M22 14 Q22 20 26 24 M24 5 L25 11 M28 3 L28 8 M30 9 L34 11 M19 20 L15 22" stroke="#c4b040" stroke-width="1.4"/></g><rect x="0" y="19" width="3" height="4" fill="#4a8a3a"/></svg>
<div class="a" style="left:326.10px;top:382.70px;width:19.90px;height:10.40px;background:#060c26"></div>
<div class="a t" style="left:328.20px;top:384.00px;font-size:9.30px;line-height:9.30px;color:#d4d5dc;-webkit-text-stroke:0.25px #d4d5dc;transform:scaleX(0.845);transform-origin:0 0;">0:14</div>
<svg class="a" style="left:349.30px;top:371.30px" width="11" height="8" viewBox="0 0 11 8"><path d="M2.6 7.3 Q0.6 7.3 0.6 5 V4.2 Q0.6 0.6 4.2 0.6 Q6.3 0.6 7.1 2.4 Q10.4 2.7 10.4 5.3 Q10.4 7.3 8.4 7.3 Z" fill="none" stroke="#3cab6c" stroke-width="1.2"/></svg>
<div class="a t" style="left:364.00px;top:371.00px;font-size:10.80px;line-height:10.80px;color:#3c37b3;-webkit-text-stroke:0.25px #3c37b3;">Leafy Seadragon</div>
<div class="a t" style="left:349.80px;top:383.00px;font-size:10.20px;line-height:10.20px;color:#55555a;">1733900180070015082</div>
<svg class="a" style="left:478.40px;top:376.20px" width="12" height="10" viewBox="0 0 12 10"><path d="M0.8 5 C2.5 -0.3 9.5 -0.3 11.2 5 C9.5 10.3 2.5 10.3 0.8 5 Z" fill="none" stroke="#3cab6c" stroke-width="1.2"/><circle cx="6" cy="5" r="1.7" fill="none" stroke="#3cab6c" stroke-width="1.2"/></svg>
<div class="a t" style="left:600.80px;top:376.00px;font-size:10.60px;line-height:10.60px;color:#4a4a4f;letter-spacing:0.059px;">05/26/2022 10:41 AM</div>
<div class="a t" style="left:726.10px;top:371.00px;font-size:10.60px;line-height:10.60px;color:#4a4a4f;letter-spacing:-0.036px;">12/13/2022 1:58 PM</div>
<div class="a t" style="left:726.10px;top:382.00px;font-size:10.60px;line-height:10.60px;color:#3c37b3;letter-spacing:-0.290px;-webkit-text-stroke:0.2px #3c37b3;width:121px;overflow:hidden;">sahumada@brightcove.com</div>
<div class="a" style="left:274.30px;top:411.50px;width:13.50px;height:13.50px;background:#fff;border:1px solid #e2e2e4;border-radius:1px"></div>
<div class="a" style="left:299.00px;top:403.70px;width:48.00px;height:27.20px;background:#fff"></div>
<svg class="a" style="left:299.80px;top:404.50px" width="46.4" height="25.6" viewBox="0 0 46 26" preserveAspectRatio="none"><rect width="46" height="26" fill="#d3d9c4"/><rect width="46" height="4" fill="#e3e6d3"/><path d="M0 3 H34 V14 Q26 10 19 14 L17 16 H0Z" fill="#6c5c4a"/><rect x="0" y="5" width="34" height="3" fill="#8c7662"/><rect y="16" width="46" height="10" fill="#cdd6c2"/><path d="M33 2 Q38 0 42 1 Q46 4 46 10 V16 H36 Q33 10 33 2Z" fill="#3a302c"/><ellipse cx="37" cy="9" rx="3" ry="4.5" fill="#c39a7c"/><path d="M40 11 L46 10 V16 H39Z" fill="#5a8aa0"/></svg>
<div class="a" style="left:324.20px;top:419.70px;width:21.80px;height:10.40px;background:#060c26"></div>
<div class="a t" style="left:326.30px;top:421.00px;font-size:9.30px;line-height:9.30px;color:#d4d5dc;-webkit-text-stroke:0.25px #d4d5dc;transform:scaleX(0.950);transform-origin:0 0;">0:33</div>
<svg class="a" style="left:349.30px;top:408.30px" width="11" height="8" viewBox="0 0 11 8"><path d="M2.6 7.3 Q0.6 7.3 0.6 5 V4.2 Q0.6 0.6 4.2 0.6 Q6.3 0.6 7.1 2.4 Q10.4 2.7 10.4 5.3 Q10.4 7.3 8.4 7.3 Z" fill="none" stroke="#3cab6c" stroke-width="1.2"/></svg>
<div class="a t" style="left:364.00px;top:408.00px;font-size:10.80px;line-height:10.80px;color:#3c37b3;-webkit-text-stroke:0.25px #3c37b3;">ITALY</div>
<div class="a t" style="left:349.80px;top:420.00px;font-size:10.20px;line-height:10.20px;color:#55555a;">1744691281230017696</div>
<svg class="a" style="left:478.40px;top:413.20px" width="12" height="10" viewBox="0 0 12 10"><path d="M0.8 5 C2.5 -0.3 9.5 -0.3 11.2 5 C9.5 10.3 2.5 10.3 0.8 5 Z" fill="none" stroke="#3cab6c" stroke-width="1.2"/><circle cx="6" cy="5" r="1.7" fill="none" stroke="#3cab6c" stroke-width="1.2"/></svg>
<div class="a t" style="left:510.00px;top:414.00px;font-size:10.80px;line-height:10.80px;color:#444;">bob</div>
<div class="a t" style="left:600.80px;top:408.00px;font-size:10.60px;line-height:10.60px;color:#4a4a4f;letter-spacing:0.049px;">09/22/2022 1:21 PM</div>
<div class="a t" style="left:600.80px;top:419.00px;font-size:10.60px;line-height:10.60px;color:#3c37b3;letter-spacing:-0.290px;-webkit-text-stroke:0.2px #3c37b3;">bbailey@brightcove.com</div>
<div class="a t" style="left:726.10px;top:408.00px;font-size:10.60px;line-height:10.60px;color:#4a4a4f;letter-spacing:0.049px;">01/05/2023 2:21 PM</div>
<div class="a t" style="left:726.10px;top:419.00px;font-size:10.60px;line-height:10.60px;color:#3c37b3;letter-spacing:-0.290px;-webkit-text-stroke:0.2px #3c37b3;width:121px;overflow:hidden;">bbailey@brightcove.com</div>
<div class="a" style="left:274.30px;top:452.25px;width:13.50px;height:13.50px;background:#fff;border:1px solid #e2e2e4;border-radius:1px"></div>
<div class="a" style="left:299.00px;top:444.45px;width:48.00px;height:27.20px;background:#fff"></div>
<svg class="a" style="left:299.80px;top:445.25px" width="46.4" height="25.6" viewBox="0 0 46 26" preserveAspectRatio="none"><rect width="46" height="26" fill="#50728a"/><rect width="46" height="9.2" fill="#90a9c0"/><path d="M14 22 Q12 15 17 12 Q22 9 26 12 Q28 17 25 23 Z" fill="#5f5752"/><path d="M25 4 Q27 8 26.5 14" stroke="#6a605a" stroke-width="2.4" fill="none"/><circle cx="25" cy="3" r="1.8" fill="#d8d2c8"/><path d="M12 26 Q18 22 28 23 V26Z" fill="#8a8580"/></svg>
<div class="a" style="left:325.10px;top:460.45px;width:20.90px;height:10.40px;background:#060c26"></div>
<div class="a t" style="left:327.20px;top:461.00px;font-size:9.30px;line-height:9.30px;color:#d4d5dc;-webkit-text-stroke:0.25px #d4d5dc;transform:scaleX(0.901);transform-origin:0 0;">0:23</div>
<svg class="a" style="left:349.30px;top:443.25px" width="11" height="8" viewBox="0 0 11 8"><path d="M2.6 7.3 Q0.6 7.3 0.6 5 V4.2 Q0.6 0.6 4.2 0.6 Q6.3 0.6 7.1 2.4 Q10.4 2.7 10.4 5.3 Q10.4 7.3 8.4 7.3 Z" fill="none" stroke="#3cab6c" stroke-width="1.2"/></svg>
<div class="a t" style="left:364.00px;top:443.00px;font-size:10.80px;line-height:10.80px;color:#3c37b3;-webkit-text-stroke:0.25px #3c37b3;">Brown Pelicans on</div>
<div class="a t" style="left:349.80px;top:454.00px;font-size:10.80px;line-height:10.80px;color:#3c37b3;-webkit-text-stroke:0.25px #3c37b3;">the Rocks</div>
<div class="a t" style="left:349.80px;top:467.00px;font-size:10.20px;line-height:10.20px;color:#55555a;">1700308830799244866</div>
<svg class="a" style="left:478.40px;top:453.95px" width="12" height="10" viewBox="0 0 12 10"><path d="M0.8 5 C2.5 -0.3 9.5 -0.3 11.2 5 C9.5 10.3 2.5 10.3 0.8 5 Z" fill="none" stroke="#3cab6c" stroke-width="1.2"/><circle cx="6" cy="5" r="1.7" fill="none" stroke="#3cab6c" stroke-width="1.2"/></svg>
<div class="a t" style="left:600.80px;top:454.00px;font-size:10.60px;line-height:10.60px;color:#4a4a4f;letter-spacing:0.049px;">05/20/2021 4:01 PM</div>
<div class="a t" style="left:726.10px;top:448.00px;font-size:10.60px;line-height:10.60px;color:#4a4a4f;letter-spacing:0.049px;">12/08/2022 2:21 PM</div>
<div class="a t" style="left:726.10px;top:460.00px;font-size:10.60px;line-height:10.60px;color:#3c37b3;letter-spacing:-0.290px;-webkit-text-stroke:0.2px #3c37b3;width:121px;overflow:hidden;">bbailey@brightcove.com</div>
<div class="a" style="left:274.30px;top:496.75px;width:13.50px;height:13.50px;background:#fff;border:1px solid #e2e2e4;border-radius:1px"></div>
<div class="a" style="left:299.00px;top:488.95px;width:48.00px;height:27.20px;background:#fff"></div>
<svg class="a" style="left:299.80px;top:489.75px" width="46.4" height="25.6" viewBox="0 0 46 26" preserveAspectRatio="none"><rect width="46" height="26" fill="#e3e2ec"/><path d="M1 26 Q3 16 12 14 L22 14 Q26 16 27 26Z" fill="#a9c7d0"/><ellipse cx="17.5" cy="8" rx="4.5" ry="5.8" fill="#a98068"/><path d="M12.6 6 Q12.5 1 17.5 1 Q22.5 1 22.4 6 Q20.5 3.5 17.5 3.6 Q14.5 3.5 12.6 6Z" fill="#3a2a25"/></svg>
<div class="a" style="left:325.10px;top:504.95px;width:20.90px;height:10.40px;background:#060c26"></div>
<div class="a t" style="left:327.20px;top:506.00px;font-size:9.30px;line-height:9.30px;color:#d4d5dc;-webkit-text-stroke:0.25px #d4d5dc;transform:scaleX(0.901);transform-origin:0 0;">0:52</div>
<svg class="a" style="left:349.30px;top:487.75px" width="11" height="8" viewBox="0 0 11 8"><path d="M2.6 7.3 Q0.6 7.3 0.6 5 V4.2 Q0.6 0.6 4.2 0.6 Q6.3 0.6 7.1 2.4 Q10.4 2.7 10.4 5.3 Q10.4 7.3 8.4 7.3 Z" fill="none" stroke="#3cab6c" stroke-width="1.2"/></svg>
<div class="a t" style="left:364.00px;top:487.00px;font-size:10.80px;line-height:10.80px;color:#3c37b3;-webkit-text-stroke:0.25px #3c37b3;">Brightcove</div>
<div class="a t" style="left:349.80px;top:499.00px;font-size:10.80px;line-height:10.80px;color:#3c37b3;-webkit-text-stroke:0.25px #3c37b3;">Overview</div>
<div class="a t" style="left:349.80px;top:511.00px;font-size:10.20px;line-height:10.20px;color:#55555a;">1744498894000075936</div>
<svg class="a" style="left:478.40px;top:498.45px" width="12" height="10" viewBox="0 0 12 10"><path d="M0.8 5 C2.5 -0.3 9.5 -0.3 11.2 5 C9.5 10.3 2.5 10.3 0.8 5 Z" fill="none" stroke="#3cab6c" stroke-width="1.2"/><circle cx="6" cy="5" r="1.7" fill="none" stroke="#3cab6c" stroke-width="1.2"/></svg>
<div class="a t" style="left:600.80px;top:493.00px;font-size:10.60px;line-height:10.60px;color:#4a4a4f;letter-spacing:0.139px;">09/20/2022 10:23 AM</div>
<div class="a t" style="left:600.80px;top:505.00px;font-size:10.60px;line-height:10.60px;color:#3c37b3;letter-spacing:-0.290px;-webkit-text-stroke:0.2px #3c37b3;">bbailey@brightcove.com</div>
<div class="a t" style="left:726.10px;top:499.00px;font-size:10.60px;line-height:10.60px;color:#4a4a4f;letter-spacing:-0.206px;">11/10/2022 1:13 PM</div>
<div class="a" style="left:0.00px;top:0.00px;width:1.20px;height:523.00px;background:rgba(255,255,255,0.1)"></div>
<div class="a" style="left:870.00px;top:42.00px;width:30.00px;height:481.00px;background:linear-gradient(to right,rgba(0,0,0,0),rgba(0,0,0,0.045))"></div>
<svg class="a" style="left:0;top:0" width="900" height="523"><polygon points="0,523 0.0,520.5 2.8,520.5 2.8,521.1 5.1,521.1 5.1,520.9 8.9,520.9 8.9,520.0 13.5,520.0 13.5,520.0 17.7,520.0 17.7,520.0 20.1,520.0 20.1,520.7 26.2,520.7 26.2,520.1 29.4,520.1 29.4,521.0 36.1,521.0 36.1,520.9 40.1,520.9 40.1,521.7 42.3,521.7 42.3,521.4 45.8,521.4 45.8,520.2 48.3,520.2 48.3,520.5 54.4,520.5 54.4,520.2 59.3,520.2 59.3,521.1 63.2,521.1 63.2,520.9 65.5,520.9 65.5,520.0 68.5,520.0 68.5,521.1 72.7,521.1 72.7,520.5 77.6,520.5 77.6,520.7 81.1,520.7 81.1,521.3 86.6,521.3 86.6,520.3 91.5,520.3 91.5,520.8 97.8,520.8 97.8,521.2 101.3,521.2 101.3,521.7 103.9,521.7 103.9,520.7 109.7,520.7 109.7,520.2 114.1,520.2 114.1,520.0 119.4,520.0 119.4,521.3 124.3,521.3 124.3,521.5 127.9,521.5 127.9,521.2 132.9,521.2 132.9,520.9 137.1,520.9 137.1,521.4 143.9,521.4 143.9,520.8 149.2,520.8 149.2,520.0 154.7,520.0 154.7,521.1 161.7,521.1 161.7,521.4 165.1,521.4 165.1,520.6 170.4,520.6 170.4,519.9 174.7,519.9 174.7,520.2 177.3,520.2 177.3,520.0 183.2,520.0 183.2,520.1 186.4,520.1 186.4,520.6 192.7,520.6 192.7,520.0 197.0,520.0 197.0,520.9 203.4,520.9 203.4,521.4 209.7,521.4 209.7,520.4 213.8,520.4 213.8,520.5 220.2,520.5 220.2,521.6 223.0,521.6 223.0,520.2 226.1,520.2 226.1,520.3 230.6,520.3 230.6,521.0 233.9,521.0 233.9,519.9 238.0,519.9 238.0,520.6 242.8,520.6 242.8,521.6 248.3,521.6 248.3,520.8 253.3,520.8 253.3,521.1 255.6,521.1 255.6,521.5 261.5,521.5 261.5,521.5 267.5,521.5 267.5,520.6 271.5,520.6 271.5,520.1 276.7,520.1 276.7,520.0 279.0,520.0 279.0,520.3 281.8,520.3 281.8,520.5 284.1,520.5 284.1,519.9 286.8,519.9 286.8,520.1 290.7,520.1 290.7,519.9 297.0,519.9 297.0,521.0 299.8,521.0 299.8,520.4 303.5,520.4 303.5,520.6 306.1,520.6 306.1,521.4 313.1,521.4 313.1,520.7 317.5,520.7 317.5,520.1 320.0,520.1 320.0,520.5 323.3,520.5 323.3,521.4 326.2,521.4 326.2,519.9 332.9,519.9 332.9,520.9 335.6,520.9 335.6,520.9 337.8,520.9 337.8,520.9 344.7,520.9 344.7,521.5 350.1,521.5 350.1,520.4 354.0,520.4 354.0,520.2 359.8,520.2 359.8,520.9 365.7,520.9 365.7,520.5 368.9,520.5 368.9,521.4 375.8,521.4 375.8,521.4 381.8,521.4 381.8,521.4 387.5,521.4 387.5,520.3 392.1,520.3 392.1,520.5 394.2,520.5 394.2,520.0 397.6,520.0 397.6,520.4 403.1,520.4 403.1,521.6 407.3,521.6 407.3,521.6 414.3,521.6 414.3,521.6 418.1,521.6 418.1,520.3 421.2,520.3 421.2,520.3 424.3,520.3 424.3,521.0 430.8,521.0 430.8,521.4 435.2,521.4 435.2,521.1 441.2,521.1 441.2,520.1 446.5,520.1 446.5,521.5 452.4,521.5 452.4,521.3 456.8,521.3 456.8,520.2 462.7,520.2 462.7,520.5 468.7,520.5 468.7,521.6 472.7,521.6 472.7,520.6 479.4,520.6 479.4,521.2 482.3,521.2 482.3,520.1 485.0,520.1 485.0,521.5 491.1,521.5 491.1,520.2 497.2,520.2 497.2,521.7 502.5,521.7 502.5,520.5 507.2,520.5 507.2,520.1 509.3,520.1 509.3,521.6 514.5,521.6 514.5,520.8 521.2,520.8 521.2,520.7 527.6,520.7 527.6,521.4 530.6,521.4 530.6,520.4 534.1,520.4 534.1,520.3 539.0,520.3 539.0,520.4 543.1,520.4 543.1,520.1 549.7,520.1 549.7,520.5 554.0,520.5 554.0,521.0 560.5,521.0 560.5,520.7 567.1,520.7 567.1,520.8 571.7,520.8 571.7,520.8 573.8,520.8 573.8,520.7 576.7,520.7 576.7,519.9 582.7,519.9 582.7,520.2 587.1,520.2 587.1,521.2 591.9,521.2 591.9,520.5 596.5,520.5 596.5,520.9 602.4,520.9 602.4,520.1 607.2,520.1 607.2,520.3 610.6,520.3 610.6,521.3 615.1,521.3 615.1,520.9 620.9,520.9 620.9,521.5 625.1,521.5 625.1,521.0 629.7,521.0 629.7,520.8 635.1,520.8 635.1,520.7 639.8,520.7 639.8,520.8 646.5,520.8 646.5,521.2 652.9,521.2 652.9,521.6 656.2,521.6 656.2,520.9 662.9,520.9 662.9,521.4 665.6,521.4 665.6,520.1 669.8,520.1 669.8,520.0 673.0,520.0 673.0,520.0 678.3,520.0 678.3,521.3 684.8,521.3 684.8,520.2 690.4,520.2 690.4,521.1 693.1,521.1 693.1,521.5 700.0,521.5 700.0,520.3 706.7,520.3 706.7,520.6 711.2,520.6 711.2,521.7 717.3,521.7 717.3,520.2 721.5,520.2 721.5,520.8 725.2,520.8 725.2,520.3 728.8,520.3 728.8,521.2 730.9,521.2 730.9,520.9 735.1,520.9 735.1,519.9 738.7,519.9 738.7,521.0 743.3,521.0 743.3,520.0 750.2,520.0 750.2,521.3 757.1,521.3 757.1,520.1 760.4,520.1 760.4,520.0 766.3,520.0 766.3,520.4 768.9,520.4 768.9,520.7 775.5,520.7 775.5,521.4 778.8,521.4 778.8,520.2 785.4,520.2 785.4,520.9 790.9,520.9 790.9,520.1 793.2,520.1 793.2,521.1 797.3,521.1 797.3,520.0 804.0,520.0 804.0,521.0 810.0,521.0 810.0,520.1 816.3,520.1 816.3,520.0 822.6,520.0 822.6,520.7 826.3,520.7 826.3,520.9 832.9,520.9 832.9,520.4 835.6,520.4 835.6,520.8 838.8,520.8 838.8,520.1 841.6,520.1 841.6,520.0 844.6,520.0 844.6,520.5 848.1,520.5 848.1,521.3 851.6,521.3 851.6,520.8 854.4,520.8 854.4,520.5 856.5,520.5 856.5,520.4 858.6,520.4 858.6,521.2 863.4,521.2 863.4,520.2 867.7,520.2 867.7,521.6 870.3,521.6 870.3,521.4 874.4,521.4 874.4,520.8 880.6,520.8 880.6,520.6 885.1,520.6 885.1,521.1 892.1,521.1 892.1,520.5 898.2,520.5 898.2,521.2 903.4,521.2 900,520.5 900,523" fill="#000"/></svg>
</body></html>
